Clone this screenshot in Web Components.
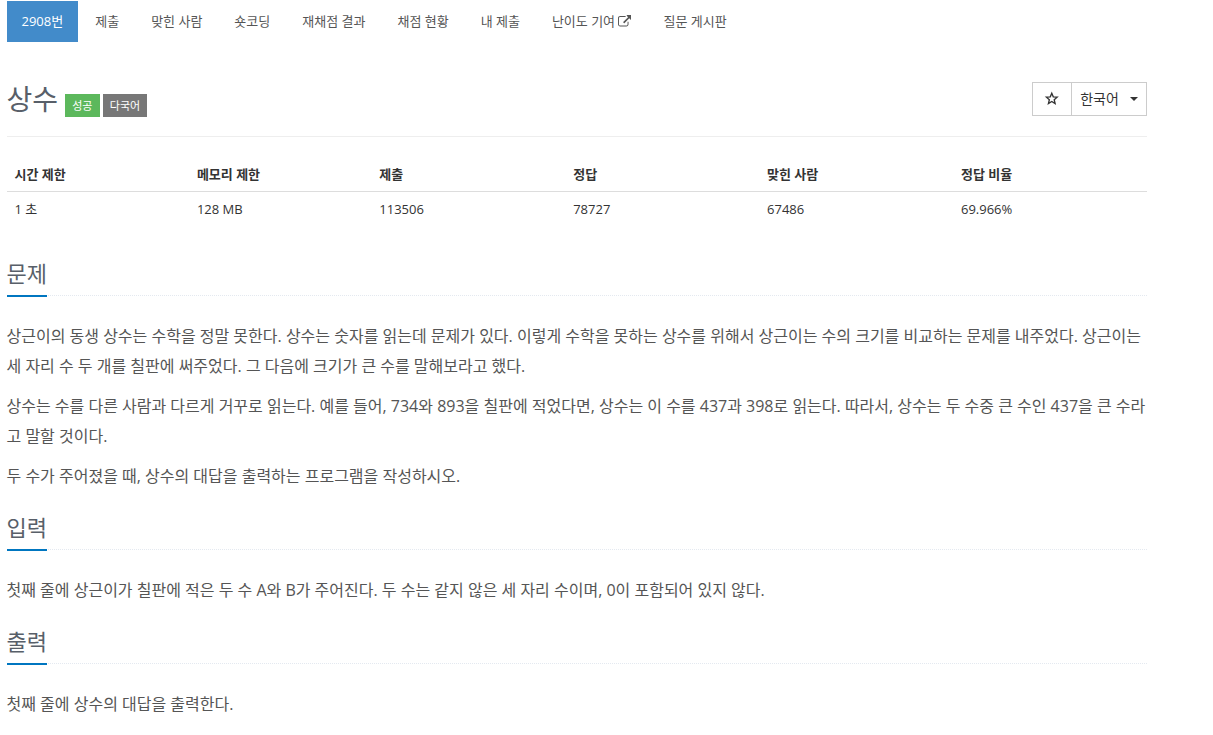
<!DOCTYPE html>
<html lang="ko">
<head>
<meta charset="utf-8">
<title>2908번: 상수</title>
<style>
  body {
    margin: 0;
    background: #fff;
    color: #333;
    font-family: 'Open Sans', 'Noto Sans CJK KR', sans-serif;
    font-size: 13px;
    line-height: 1.6;
  }
</style>
</head>
<body>
<problem-page>
  <problem-menu slot="menu">
    <menu-tab active>2908번</menu-tab>
    <menu-tab>제출</menu-tab>
    <menu-tab>맞힌 사람</menu-tab>
    <menu-tab>숏코딩</menu-tab>
    <menu-tab>재채점 결과</menu-tab>
    <menu-tab>채점 현황</menu-tab>
    <menu-tab>내 제출</menu-tab>
    <menu-tab external>난이도 기여</menu-tab>
    <menu-tab>질문 게시판</menu-tab>
  </problem-menu>
  <problem-header slot="header">
    상수
    <problem-label slot="labels" type="success">성공</problem-label>
    <problem-label slot="labels">다국어</problem-label>
    <language-select slot="actions">한국어</language-select>
  </problem-header>
  <problem-info></problem-info>
  <problem-section heading="문제">
    <p>상근이의 동생 상수는 수학을 정말 못한다. 상수는 숫자를 읽는데 문제가 있다. 이렇게 수학을 못하는 상수를 위해서 상근이는 수의 크기를 비교하는 문제를 내주었다. 상근이는 세 자리 수 두 개를 칠판에 써주었다. 그 다음에 크기가 큰 수를 말해보라고 했다.</p>
    <p>상수는 수를 다른 사람과 다르게 거꾸로 읽는다. 예를 들어, 734와 893을 칠판에 적었다면, 상수는 이 수를 437과 398로 읽는다. 따라서, 상수는 두 수중 큰 수인 437을 큰 수라고 말할 것이다.</p>
    <p>두 수가 주어졌을 때, 상수의 대답을 출력하는 프로그램을 작성하시오.</p>
  </problem-section>
  <problem-section heading="입력">
    <p>첫째 줄에 상근이가 칠판에 적은 두 수 A와 B가 주어진다. 두 수는 같지 않은 세 자리 수이며, 0이 포함되어 있지 않다.</p>
  </problem-section>
  <problem-section heading="출력">
    <p>첫째 줄에 상수의 대답을 출력한다.</p>
  </problem-section>
</problem-page>

<script>
class ProblemPage extends HTMLElement {
  constructor() {
    super();
    this.attachShadow({ mode: 'open' });
    this.shadowRoot.innerHTML = `
      <style>
        :host {
          display: block;
          width: 1140px;
          padding: 1px 0 0 6.5px;
        }
      </style>
      <slot name="menu"></slot>
      <slot name="header"></slot>
      <slot></slot>
    `;
  }
}

class ProblemMenu extends HTMLElement {
  constructor() {
    super();
    this.attachShadow({ mode: 'open' });
    this.shadowRoot.innerHTML = `
      <style>
        :host {
          display: flex;
          gap: 2px;
        }
      </style>
      <slot></slot>
    `;
  }
}

class MenuTab extends HTMLElement {
  constructor() {
    super();
    this.attachShadow({ mode: 'open' });
  }

  connectedCallback() {
    const icon = this.hasAttribute('external')
      ? `<svg width="13.4" height="13.4" viewBox="0 0 1792 1792">
          <path fill="currentColor" d="M1408 928v320q0 119-84.500 203.500t-203.500 84.500h-832q-119 0-203.500-84.500t-84.500-203.500v-832q0-119 84.500-203.500t203.500-84.500h704q14 0 23 9t9 23v64q0 14-9 23t-23 9h-704q-66 0-113 47t-47 113v832q0 66 47 113t113 47h832q66 0 113-47t47-113v-320q0-14 9-23t23-9h64q14 0 23 9t9 23zm384-864v512q0 26-19 45t-45 19-45-19l-176-176-652 652q-10 10-23 10t-23-10l-114-114q-10-10-10-23t10-23l652-652-176-176q-19-19-19-45t19-45 45-19h512q26 0 45 19t19 45z"/>
        </svg>`
      : '';
    this.shadowRoot.innerHTML = `
      <style>
        :host {
          display: block;
          padding: 10px 15px;
          color: #555;
          white-space: nowrap;
          cursor: pointer;
        }

        :host([active]) {
          background: #428bca;
          color: #fff;
        }

        svg {
          margin-left: 3px;
          vertical-align: -2px;
        }
      </style>
      <slot></slot>${icon}
    `;
  }
}

class ProblemHeader extends HTMLElement {
  constructor() {
    super();
    this.attachShadow({ mode: 'open' });
    this.shadowRoot.innerHTML = `
      <style>
        :host {
          display: flex;
          justify-content: space-between;
          align-items: flex-start;
          box-sizing: border-box;
          height: 95px;
          padding-top: 40px;
          border-bottom: 1px solid #eee;
        }

        .title {
          display: flex;
          align-items: flex-start;
        }

        h1 {
          margin: 0 7px 0 0;
          color: #585f69;
          font-size: 28px;
          font-weight: 400;
          line-height: 34px;
        }

        .labels {
          display: flex;
          gap: 3px;
          padding-top: 12px;
        }
      </style>
      <div class="title">
        <h1><slot></slot></h1>
        <div class="labels"><slot name="labels"></slot></div>
      </div>
      <slot name="actions"></slot>
    `;
  }
}

class ProblemLabel extends HTMLElement {
  constructor() {
    super();
    this.attachShadow({ mode: 'open' });
    this.shadowRoot.innerHTML = `
      <style>
        :host {
          display: block;
          padding: 0 7.2px;
          background: #777;
          color: #fff;
          font-size: 11px;
          line-height: 23px;
        }

        :host([type='success']) {
          background: #5cb85c;
        }
      </style>
      <slot></slot>
    `;
  }
}

class LanguageSelect extends HTMLElement {
  constructor() {
    super();
    this.attachShadow({ mode: 'open' });
    this.shadowRoot.innerHTML = `
      <style>
        :host {
          display: flex;
        }

        button {
          display: flex;
          align-items: center;
          justify-content: center;
          box-sizing: border-box;
          height: 34px;
          width: 40px;
          padding: 0;
          border: 1px solid #ccc;
          background: #fff;
          color: #333;
          font-family: inherit;
          font-size: 14px;
          line-height: 20px;
          cursor: pointer;
        }

        button + button {
          width: 76px;
          margin-left: -1px;
          padding-left: 1px;
          gap: 11px;
        }

        slot {
          display: block;
        }

        .caret {
          border: 4px solid transparent;
          border-top-color: #333;
          border-bottom: 0;
          margin-top: 1px;
        }
      </style>
      <button aria-label="즐겨찾기">
        <svg width="16" height="16" viewBox="1 1.300 14.400 14.400">
          <path fill="none" stroke="currentColor" stroke-width="1.2" d="M8 3.300L9.350 6.540 12.850 6.820 10.190 9.110 11 12.530 8 10.700 5 12.530 5.810 9.110 3.150 6.820 6.650 6.540z"/>
        </svg>
      </button>
      <button><slot></slot><span class="caret"></span></button>
    `;
  }
}

class ProblemInfo extends HTMLElement {
  constructor() {
    super();
    this.attachShadow({ mode: 'open' });
    this.shadowRoot.innerHTML = `
      <style>
        :host {
          display: block;
          margin-top: 17px;
        }

        table {
          width: 100%;
          table-layout: fixed;
          border-spacing: 0;
        }

        th,
        td {
          height: 19px;
          padding: 8px;
          line-height: 19px;
          text-align: left;
        }

        th {
          box-sizing: border-box;
          height: 38px;
          width: 193.9px;
          padding: 11px 8px 7px;
          border-bottom: 1px solid #ddd;
        }

        th:first-child,
        th:nth-child(2) {
          width: 182.4px;
        }

        th:last-child {
          width: auto;
        }
      </style>
      <table>
        <thead>
          <tr>
            <th>시간 제한</th>
            <th>메모리 제한</th>
            <th>제출</th>
            <th>정답</th>
            <th>맞힌 사람</th>
            <th>정답 비율</th>
          </tr>
        </thead>
        <tbody>
          <tr>
            <td>1 초</td>
            <td>128 MB</td>
            <td>113506</td>
            <td>78727</td>
            <td>67486</td>
            <td>69.966%</td>
          </tr>
        </tbody>
      </table>
    `;
  }
}

class ProblemSection extends HTMLElement {
  constructor() {
    super();
    this.attachShadow({ mode: 'open' });
  }

  connectedCallback() {
    this.shadowRoot.innerHTML = `
      <style>
        :host {
          display: block;
          padding-top: 13px;
        }

        :host(:first-of-type) {
          padding-top: 23px;
        }

        .headline {
          display: flex;
          height: 45px;
          border-bottom: 1px dotted #e4e9f0;
          margin-bottom: 25px;
        }

        h2 {
          box-sizing: border-box;
          height: 47px;
          margin: 0;
          padding-top: 6px;
          border-bottom: 2px solid #0076c0;
          color: #585f69;
          font-size: 22px;
          font-weight: 400;
          line-height: 34px;
        }

        ::slotted(p) {
          margin: 0 0 10px;
          color: #555;
          font-size: 16px;
          line-height: 30px;
        }

        ::slotted(p:last-child) {
          margin-bottom: 0;
        }
      </style>
      <div class="headline"><h2>${this.getAttribute('heading')}</h2></div>
      <slot></slot>
    `;
  }
}

customElements.define('problem-page', ProblemPage);
customElements.define('problem-menu', ProblemMenu);
customElements.define('menu-tab', MenuTab);
customElements.define('problem-header', ProblemHeader);
customElements.define('problem-label', ProblemLabel);
customElements.define('language-select', LanguageSelect);
customElements.define('problem-info', ProblemInfo);
customElements.define('problem-section', ProblemSection);
</script>
</body>
</html>
